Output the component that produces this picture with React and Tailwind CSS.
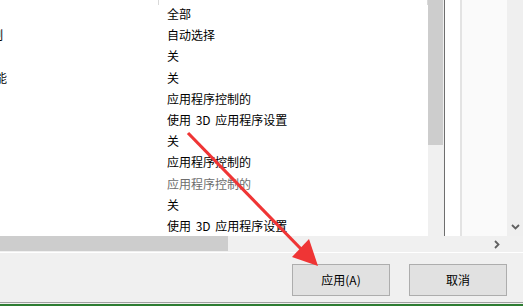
import React from 'react';

const rows = [
  { text: '全部' },
  { text: '自动选择', left: '控制', leftShift: '-ml-[21px]' },
  { text: '关' },
  { text: '关', left: '性能', leftShift: '-ml-[17px]' },
  { text: '应用程序控制的' },
  { text: '使用 3D 应用程序设置' },
  { text: '关' },
  { text: '应用程序控制的' },
  { text: '应用程序控制的', muted: true },
  { text: '关' },
  { text: '使用 3D 应用程序设置' },
];

const ChevronDown = () => (
  <svg width="9" height="6" viewBox="0 0 9 6">
    <polyline points="1,1 4.5,4.5 8,1" fill="none" stroke="#606060" strokeWidth="1.8" />
  </svg>
);

const ChevronRight = () => (
  <svg width="6" height="9" viewBox="0 0 6 9">
    <polyline points="1,1 4.5,4.5 1,8" fill="none" stroke="#606060" strokeWidth="1.8" />
  </svg>
);

const Button = ({ children }) => (
  <button
    type="button"
    className="w-[98px] h-[32px] border border-[#adadad] bg-[#e1e1e1] text-[12px] text-black flex items-center justify-center"
  >
    {children}
  </button>
);

const App = () => {
  return (
    <div
      className="relative w-[523px] h-[306px] overflow-hidden bg-[#f0f0f0] text-[12px] text-black"
      style={{ fontFamily: '"Noto Sans CJK SC", "Noto Sans", sans-serif' }}
    >
      {/* list + right panel */}
      <div className="flex h-[236px] bg-white">
        <div className="relative flex w-[428px] bg-white">
          <div className="w-[158px] pt-[3px] overflow-hidden">
            {rows.map((r, i) => (
              <div key={i} className="h-[21.2px] leading-[21px] whitespace-nowrap">
                {r.left ? <span className={`inline-block ${r.leftShift}`}>{r.left}</span> : null}
              </div>
            ))}
          </div>
          <div className="w-px h-[5px] bg-[#d9d9d9]" />
          <div className="flex-1 pl-[8px] pt-[3px]">
            {rows.map((r, i) => (
              <div
                key={i}
                className={`h-[21.2px] leading-[21px] whitespace-nowrap [word-spacing:2px] ${r.muted ? 'text-[#6d6d6d]' : ''}`}
              >
                {r.text}
              </div>
            ))}
          </div>
          <div className="w-px h-[5px] bg-[#d9d9d9]" />
        </div>

        {/* vertical scrollbar */}
        <div className="w-[16px] flex flex-col bg-[#f0f0f0]">
          <div className="w-[15px] h-[145px] bg-[#cdcdcd]" />
        </div>
        <div className="w-px bg-[#6e6e6e]" />
        <div className="w-[15px] bg-white" />
        <div className="w-[2px] bg-[#e3e3e3]" />
        <div className="w-[45px] bg-[#fafafa]" />
        <div className="w-[16px] bg-[#efefef] flex flex-col justify-end items-center pb-[6px]">
          <ChevronDown />
        </div>
      </div>

      {/* horizontal scrollbar */}
      <div className="flex h-[16px] bg-[#f0f0f0]">
        <div className="w-[228px] h-[15px] bg-[#cdcdcd]" />
        <div className="flex-1 flex items-center justify-end pr-[23px]">
          <ChevronRight />
        </div>
      </div>
      <div className="h-px bg-white" />

      {/* buttons */}
      <div className="flex justify-end gap-[19px] pr-[16px] pt-[11px]">
        <Button>应用(A)</Button>
        <Button>取消</Button>
      </div>

      <div className="absolute left-0 right-0 top-[302px] h-px bg-[#a0a0a0]" />
      <div className="absolute left-0 right-0 top-[304px] h-[2px] bg-[#2e7d32]" />

      {/* annotation arrow */}
      <svg className="absolute left-0 top-0 pointer-events-none" width="523" height="306">
        <line x1="188" y1="133" x2="303" y2="251" stroke="#ef3535" strokeWidth="3.2" />
        <polygon points="318,266 292,257 309,239" fill="#ef3535" />
      </svg>
    </div>
  );
};

export default App;
